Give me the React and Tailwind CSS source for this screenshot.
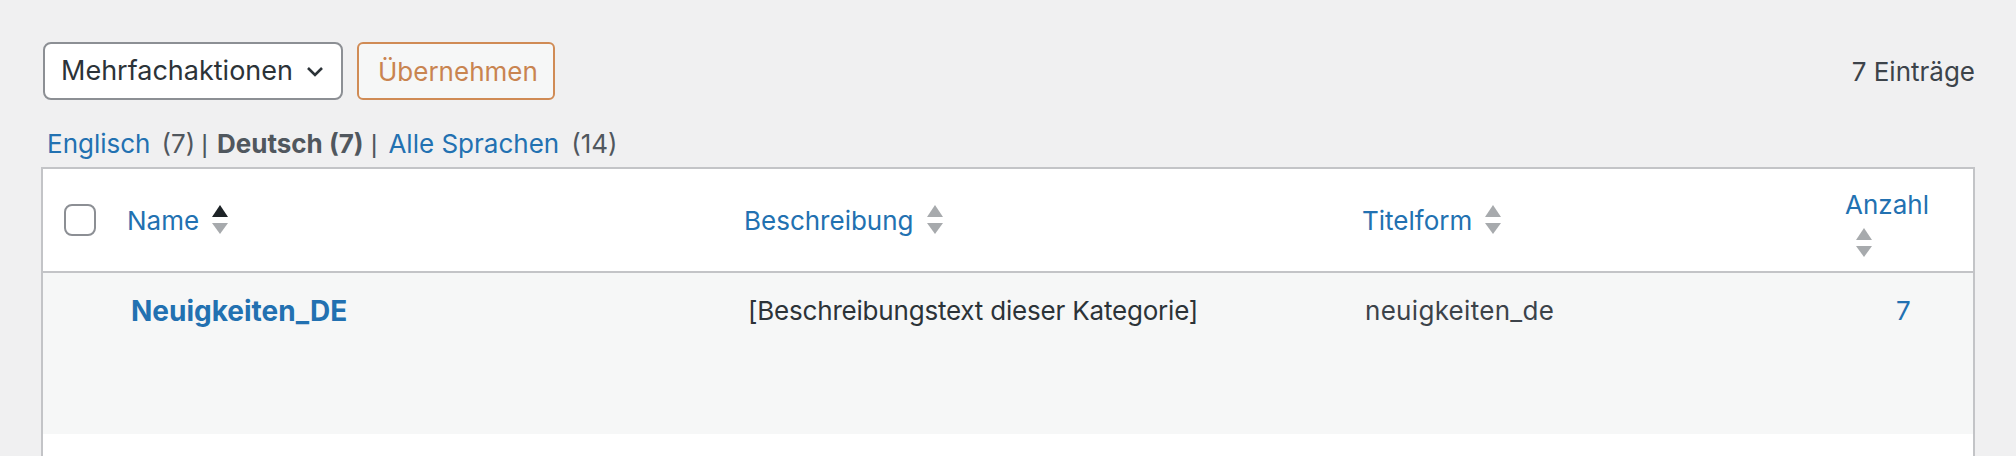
import React from 'react';

const SortIcon = ({ active }) => (
  <svg width="16" height="30" viewBox="0 0 16 30" className="shrink-0">
    <path d="M8 0 L16 12 L0 12 Z" fill={active ? '#1d2327' : '#a7aaad'} />
    <path d="M0 18 L16 18 L8 29 Z" fill="#a7aaad" />
  </svg>
);

const columns = [
  { key: 'name', label: 'Name', width: 'w-[617px]', active: true },
  { key: 'desc', label: 'Beschreibung', width: 'w-[618px]' },
  { key: 'slug', label: 'Titelform', width: 'w-[483px]' },
];

const App = () => {
  return (
    <div className="h-[456px] w-full overflow-hidden bg-[#f0f0f1] px-[41px] pt-[42px] font-['Inter',sans-serif] text-[26px] text-[#3c434a]">
      {/* Werkzeugleiste oben */}
      <div className="flex items-center justify-between pl-[2px]">
        <div className="flex items-center gap-[14px]">
          <div className="flex h-[58px] w-[300px] items-center justify-between rounded-[8px] border-2 border-[#8c8f94] bg-white pl-[16px] pr-[18px] text-[27px] text-[#2c3338]">
            <span>Mehrfachaktionen</span>
            <svg width="16" height="11" viewBox="0 0 16 11">
              <path d="M1 2 L8 9 L15 2" fill="none" stroke="#2c3338" strokeWidth="2.6" />
            </svg>
          </div>
          <button className="flex h-[58px] w-[198px] items-center rounded-[6px] border-2 border-[#d08b55] bg-[#f6f7f7] pl-[19px] text-[26px] text-[#c98450]">
            Übernehmen
          </button>
        </div>
        <span className="text-[#3c434a]">7 Einträge</span>
      </div>

      {/* Sprachfilter */}
      <div className="mt-[26px] flex h-[36px] items-center pl-[6px] leading-[36px]">
        <a className="text-[#2271b1]">Englisch</a>
        <span className="ml-[11px] text-[#50575e]">(7)</span>
        <span className="ml-[6px] font-['Liberation_Sans',sans-serif] text-[#50575e]">|</span>
        <span className="ml-[9px] font-bold text-[#50575e]">Deutsch (7)</span>
        <span className="ml-[7px] font-['Liberation_Sans',sans-serif] text-[#50575e]">|</span>
        <a className="ml-[11px] text-[#2271b1]">Alle Sprachen</a>
        <span className="ml-[12px] text-[#50575e]">(14)</span>
      </div>

      {/* Tabelle */}
      <div className="mt-[5px] h-[400px] border-2 border-[#c3c4c7] bg-white">
        <div className="flex h-[104px] items-center border-b-2 border-[#c3c4c7]">
          <div className="flex w-[64px] shrink-0 pl-[21px]">
            <div className="h-[32px] w-[32px] rounded-[8px] border-2 border-[#8c8f94] bg-white" />
          </div>
          {columns.map((col) => (
            <div key={col.key} className={`${col.width} flex shrink-0 items-center gap-[13px] pl-[20px]`}>
              <a className="text-[#2271b1]">{col.label}</a>
              <SortIcon active={col.active} />
            </div>
          ))}
          <div className="flex w-[150px] shrink-0 flex-col self-start pl-[20px] pt-[18px]">
            <a className="leading-[36px] text-[#2271b1]">Anzahl</a>
            <div className="ml-[11px] mt-[5px]">
              <SortIcon />
            </div>
          </div>
        </div>

        <div className="flex h-[161px] items-start bg-[#f6f7f7] pt-[20px] leading-[36px]">
          <div className="w-[64px] shrink-0" />
          <div className="w-[617px] shrink-0 pl-[24px]">
            <a className="text-[28px] font-bold text-[#2271b1]">Neuigkeiten_DE</a>
          </div>
          <div className="w-[618px] shrink-0 pl-[24px] tracking-[-0.2px] text-[#2c3338]">
            [Beschreibungstext dieser Kategorie]
          </div>
          <div className="w-[483px] shrink-0 pl-[23px] tracking-[0.3px] text-[#3c434a]">neuigkeiten_de</div>
          <div className="w-[150px] shrink-0 pl-[71px] text-[#2271b1]">7</div>
        </div>
      </div>
    </div>
  );
};

export default App;
